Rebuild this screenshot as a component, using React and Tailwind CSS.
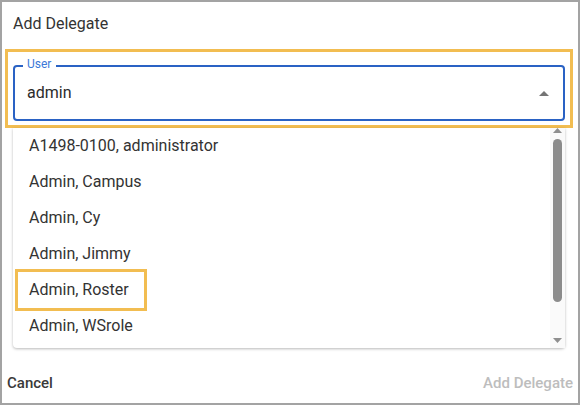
const users = [
  'A1498-0100, administrator',
  'Admin, Campus',
  'Admin, Cy',
  'Admin, Jimmy',
  'Admin, Roster',
  'Admin, WSrole',
]

const Caret = ({ up, className }) => (
  <svg width="10" height="5" viewBox="0 0 10 5" className={className}>
    <path d={up ? 'M0 5 L5 0 L10 5 Z' : 'M0 0 L5 5 L10 0 Z'} fill="currentColor" />
  </svg>
)

const Scrollbar = () => (
  <div className="w-[15px] bg-[#fafafa] flex flex-col items-center pb-[5px] text-[#8f8f8f]">
    <svg width="9" height="5" viewBox="0 0 9 5">
      <path d="M0 5 L4.5 0 L9 5 Z" fill="currentColor" />
    </svg>
    <div className="mt-[6px] w-[9px] h-[163px] rounded-full bg-[#8c8c8c]" />
    <div className="flex-1" />
    <svg width="9" height="5" viewBox="0 0 9 5">
      <path d="M0 0 L4.5 5 L9 0 Z" fill="currentColor" />
    </svg>
  </div>
)

const App = () => {
  return (
    <div className="w-[580px] h-[405px] border-2 border-[#a3a3a3] bg-white flex flex-col font-['Roboto',sans-serif]">
      <h2 className="h-[47px] pl-[11px] pt-[10px] text-[16px] leading-6 text-[#333]">Add Delegate</h2>

      <div className="ml-[3px] w-[568px] h-[79px] border-[3px] border-[#f2bd51] pt-[13px] px-[5px]">
        <div className="relative h-[56px] rounded border-2 border-[#2a62c4] flex items-center pl-[12px]">
          <span className="absolute -top-[10px] left-[8px] pl-[4px] pr-[5px] bg-white text-[12px] leading-[14px] text-[#3c78d8]">
            User
          </span>
          <span className="text-[16px] leading-6 text-[#2b2b2b]">admin</span>
          <Caret up className="ml-auto mr-[14px] text-[#757575]" />
        </div>
      </div>

      <div className="ml-[11px] w-[552px] h-[220px] flex rounded-b shadow-[0_1px_3px_rgba(0,0,0,0.28)] bg-white">
        <ul className="flex-1">
          {users.map((name) => (
            <li key={name} className="relative h-9 pl-[16px] flex items-center text-[16px] text-[#333]">
              {name === 'Admin, Roster' && (
                <span className="absolute left-[2px] -top-[3px] w-[132px] h-[42px] border-[3px] border-[#f2bd51]" />
              )}
              {name}
            </li>
          ))}
        </ul>
        <Scrollbar />
      </div>

      <div className="mt-auto h-[36px] pb-[4px] px-[5px] flex items-center justify-between text-[15px] font-medium">
        <button className="text-[#3a3a3a]">Cancel</button>
        <button className="text-[#bdbdbd]">Add Delegate</button>
      </div>
    </div>
  )
}

export default App
